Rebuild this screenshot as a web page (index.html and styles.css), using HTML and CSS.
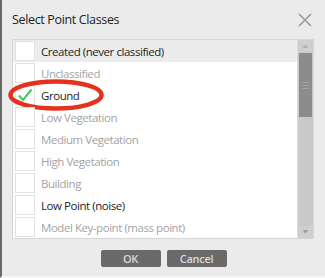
FILE: index.html
```html
<!DOCTYPE html>
<html>
<head>
<meta charset="utf-8">
<link rel="stylesheet" href="styles.css">
</head>
<body>
<div class="dialog">
  <div class="titlebar">
    <span class="title">Select Point Classes</span>
    <svg class="close" width="16" height="16" viewBox="0 0 16 16"><path d="M2 2 L14 14 M14 2 L2 14" stroke="#9a9a9a" stroke-width="1.6" fill="none"/></svg>
  </div>
  <div class="listbox">
    <div class="rows">
      <div class="row first"><span class="cb"></span><span class="lbl on">Created (never classified)</span></div>
      <div class="row"><span class="cb"></span><span class="lbl">Unclassified</span></div>
      <div class="row ground"><span class="cb"><svg width="16" height="14" viewBox="0 0 16 14"><path d="M2 7.5 L6 12 L14.5 1.5" stroke="#3ec85a" stroke-width="2" fill="none"/></svg></span><span class="lbl on">Ground</span>
        <svg class="ring" width="96" height="32" viewBox="0 0 96 32"><ellipse cx="48" cy="16" rx="45.5" ry="13.5" stroke="#e5321e" stroke-width="4.5" fill="none"/></svg>
      </div>
      <div class="row"><span class="cb"></span><span class="lbl">Low Vegetation</span></div>
      <div class="row"><span class="cb"></span><span class="lbl">Medium Vegetation</span></div>
      <div class="row"><span class="cb"></span><span class="lbl">High Vegetation</span></div>
      <div class="row"><span class="cb"></span><span class="lbl">Building</span></div>
      <div class="row"><span class="cb"></span><span class="lbl on">Low Point (noise)</span></div>
      <div class="row"><span class="cb"></span><span class="lbl">Model Key-point (mass point)</span></div>
    </div>
    <div class="scrollbar">
      <svg class="arrow" width="15" height="12" viewBox="0 0 15 12"><path d="M4.5 8 L7.5 4.5 L10.5 8 Z" fill="#b4b4b4"/></svg>
      <div class="track">
        <div class="thumb"><span class="grip"></span><span class="grip"></span><span class="grip"></span></div>
      </div>
      <svg class="arrow" width="15" height="12" viewBox="0 0 15 12"><path d="M4.5 4 L7.5 7.5 L10.5 4 Z" fill="#9e9e9e"/></svg>
    </div>
  </div>
  <div class="buttons">
    <button class="btn">OK</button>
    <button class="btn">Cancel</button>
  </div>
</div>
</body>
</html>
```

FILE: styles.css
```css
html, body {
  margin: 0;
  padding: 0;
  background: #ebebeb;
}
body {
  width: 325px;
  height: 278px;
  overflow: hidden;
  font-family: "Open Sans", "Noto Sans", sans-serif;
}
.dialog {
  width: 325px;
  height: 278px;
  box-sizing: border-box;
  border-left: 2px solid #6a6a6a;
  border-bottom: 2px solid #f6f6f6;
  background: #ebebeb;
  padding: 0 11px 0 10px;
  display: flex;
  flex-direction: column;
}
.titlebar {
  height: 39px;
  display: flex;
  align-items: center;
  justify-content: space-between;
  padding-bottom: 1px;
  box-sizing: border-box;
}
.title {
  font-size: 12.5px;
  color: #222;
  letter-spacing: -0.35px;
}
.close {
  margin-right: 1px;
  margin-top: 1px;
}
.listbox {
  height: 200px;
  box-sizing: border-box;
  border: 1px solid #d6d6d6;
  background: #fff;
  display: flex;
}
.rows {
  flex: 1;
  display: flex;
  flex-direction: column;
}
.row {
  height: 22px;
  display: flex;
  align-items: center;
  padding-left: 2px;
  position: relative;
}
.row.first {
  background: #ececec;
}
.cb {
  width: 18px;
  height: 18px;
  border: 1px solid #e2e2e2;
  background: #fff;
  display: flex;
  align-items: center;
  justify-content: center;
  flex: none;
}
.lbl {
  margin-left: 6px;
  font-size: 11.5px;
  letter-spacing: -0.45px;
  color: #a3a3a3;
  white-space: nowrap;
}
.lbl.on {
  color: #1e1e1e;
}
.ring {
  position: absolute;
  left: -5px;
  top: -5px;
}
.scrollbar {
  width: 15px;
  background: #c9c9c9;
  display: flex;
  flex-direction: column;
  border-left: 1px solid #dcdcdc;
}
.arrow {
  flex: none;
  display: block;
  background: #cfcfcf;
}
.track {
  flex: 1;
}
.thumb {
  margin: 1px 1px 0 1px;
  height: 64px;
  background: #8c8c8c;
  display: flex;
  flex-direction: column;
  align-items: center;
  justify-content: center;
  gap: 2px;
}
.grip {
  width: 7px;
  height: 1px;
  background: #a4a4a4;
}
.buttons {
  display: flex;
  justify-content: center;
  gap: 6px;
  margin-top: 11px;
  padding-left: 1px;
}
.btn {
  width: 60px;
  height: 17px;
  border: none;
  border-radius: 2px;
  background: #6a6a6a;
  color: #d9d9d9;
  font-family: "Open Sans", "Noto Sans", sans-serif;
  font-size: 11px;
  font-weight: 600;
  letter-spacing: -0.3px;
  padding: 0;
  line-height: 17px;
}
```
